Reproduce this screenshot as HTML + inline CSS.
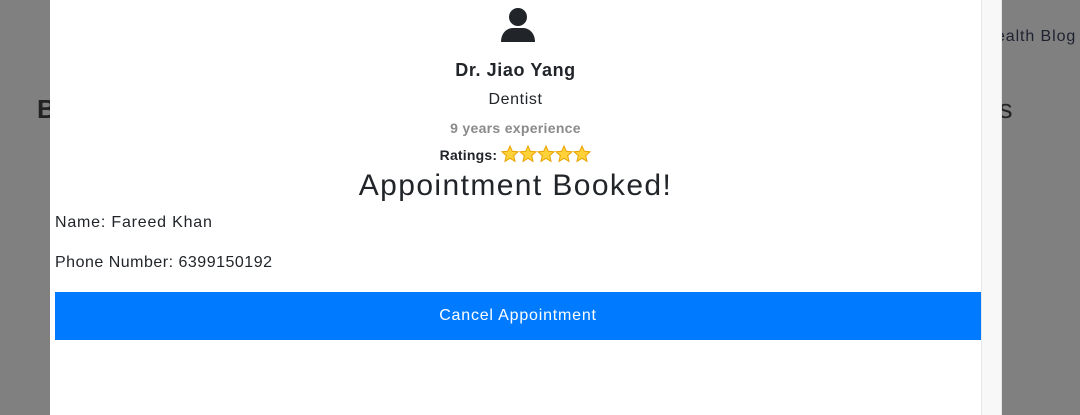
<!DOCTYPE html>
<html><head><meta charset="utf-8"><style>
body{margin:0;width:1080px;height:415px;overflow:hidden;background:#808080;font-family:"Liberation Sans",sans-serif;position:relative;color:#212529}
.bg{position:absolute;color:#1e2230}
.modal{position:absolute;left:50px;top:0;width:952px;height:415px;background:#fff}
.sb{position:absolute;left:931px;top:0;width:19px;height:415px;background:#f8f8f8;border-left:1px solid #e6e6e6;border-right:1px solid #e6e6e6}
.c{position:absolute;left:0;width:931px;text-align:center}
</style></head><body>
<div class="bg" style="left:37px;top:94px;font-size:26px;color:#222;font-weight:bold">B</div>
<div class="bg" style="left:999px;top:94px;font-size:27px;color:#222">s</div>
<div class="bg" style="left:996px;top:28px;font-size:16px;letter-spacing:0.9px">ealth Blog</div>
<div class="modal">
<div class="sb"></div>
<svg style="position:absolute;left:450px;top:6px" width="36" height="37" viewBox="0 0 36 37"><circle cx="18" cy="11" r="9" fill="#212529"/><path d="M1 36 C1 26 8 22 13 22 L23 22 C28 22 35 26 35 36 Z" fill="#212529"/></svg>
<div class="c" style="top:60px;font-size:18px;font-weight:bold;letter-spacing:0.6px">Dr. Jiao Yang</div>
<div class="c" style="top:91px;font-size:16px;letter-spacing:0.6px">Dentist</div>
<div class="c" style="top:120px;font-size:14px;font-weight:bold;color:#8a8a8a;letter-spacing:0.3px">9 years experience</div>
<div class="c" style="top:145px;font-size:14px;font-weight:bold;letter-spacing:0.2px">Ratings: <span style="display:inline-block;vertical-align:-3px"><svg width="90" height="18" viewBox="0 0 90 18"><g fill="#ffd23a" stroke="#e8a300" stroke-width="1"><path id="s" d="M9 1 L11.3 6.3 L17 6.8 L12.7 10.6 L14 16.3 L9 13.3 L4 16.3 L5.3 10.6 L1 6.8 L6.7 6.3 Z"/><use href="#s" x="18"/><use href="#s" x="36"/><use href="#s" x="54"/><use href="#s" x="72"/></g></svg></span></div>
<div class="c" style="top:169px;font-size:30px;letter-spacing:1.4px">Appointment Booked!</div>
<div style="position:absolute;left:5px;top:214px;font-size:16px;letter-spacing:0.8px">Name: Fareed Khan</div>
<div style="position:absolute;left:5px;top:254px;font-size:16px;letter-spacing:0.5px">Phone Number: 6399150192</div>
<div style="position:absolute;left:5px;top:292px;width:926px;height:48px;background:#007bff;color:#fff;font-size:16px;line-height:48px;text-align:center;letter-spacing:0.8px">Cancel Appointment</div>
</div>
</body></html>
